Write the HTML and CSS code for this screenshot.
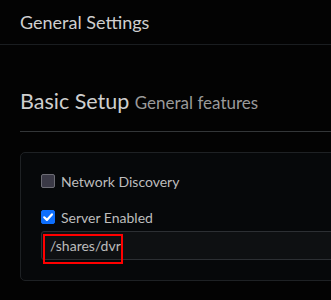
FILE: index.html
```html
<!DOCTYPE html>
<html>
  <head>
    <title>General Settings</title>
    <link rel="stylesheet" href="styles.css">
  </head>
  <body>
    <div class="page-header">General Settings</div>

    <div class="section">
      <h2 class="section-title">Basic Setup <small>General features</small></h2>

      <div class="card">
        <label class="check-row">
          <span class="check-box"></span>
          Network Discovery
        </label>

        <label class="check-row checked-row">
          <span class="check-box checked">
            <svg viewBox="0 0 14 14" width="14" height="14">
              <path d="M3.2 7.3 L5.9 9.9 L10.9 4.4" fill="none" stroke="#fff" stroke-width="2.2" stroke-linecap="round" stroke-linejoin="round"/>
            </svg>
          </span>
          Server Enabled
        </label>

        <div class="path-field">
          <input type="text" class="path-input" value="/shares/dvr">
          <div class="highlight"></div>
        </div>
      </div>
    </div>
  </body>
</html>
```

FILE: styles.css
```css
body {
  margin: 0;
  background-color: #030303;
  font-family: Lato, "Noto Sans", sans-serif;
  color: #bdbdbd;
  overflow: hidden;
}
.page-header {
  height: 45px;
  padding: 0 20px;
  display: flex;
  align-items: center;
  font-size: 18px;
  color: #cfcfcf;
  border-bottom: 1px solid #1a1d20;
  box-sizing: border-box;
}
.section {
  padding-left: 20px;
}
.section-title {
  margin: 0;
  padding: 42px 0 14px;
  font-size: 21.5px;
  font-weight: normal;
  color: #cfcfcf;
  border-bottom: 1px solid #333638;
  line-height: 28px;
}
.section-title small {
  font-size: 17px;
  color: #9a9a9a;
}
.card {
  margin-top: 20px;
  width: 400px;
  padding: 21px 20px 20px;
  background-color: #06080a;
  border: 1px solid #1e2124;
  border-radius: 5px;
}
.check-row {
  display: flex;
  align-items: center;
  gap: 6px;
  font-size: 14px;
  height: 14px;
  margin-bottom: 22px;
}
.checked-row {
  margin-bottom: 7px;
}
.check-box {
  width: 14px;
  height: 14px;
  box-sizing: border-box;
  background-color: #3a3946;
  border: 1px solid #6c6c74;
  border-radius: 2px;
  display: flex;
}
.check-box.checked {
  background-color: #0d6efd;
  border-color: #0d6efd;
}
.check-box svg {
  margin: -1px;
}
.path-field {
  position: relative;
}
.path-input {
  display: block;
  width: 100%;
  height: 29px;
  box-sizing: border-box;
  padding: 0 8px;
  font-family: inherit;
  font-size: 14px;
  color: #bcbcbc;
  background-color: #0e1012;
  border: 1px solid #2c2f33;
  border-radius: 3px;
}
.highlight {
  position: absolute;
  left: 2px;
  top: 3px;
  width: 80px;
  height: 30px;
  box-sizing: border-box;
  border: 2px solid #ff0000;
}
```
